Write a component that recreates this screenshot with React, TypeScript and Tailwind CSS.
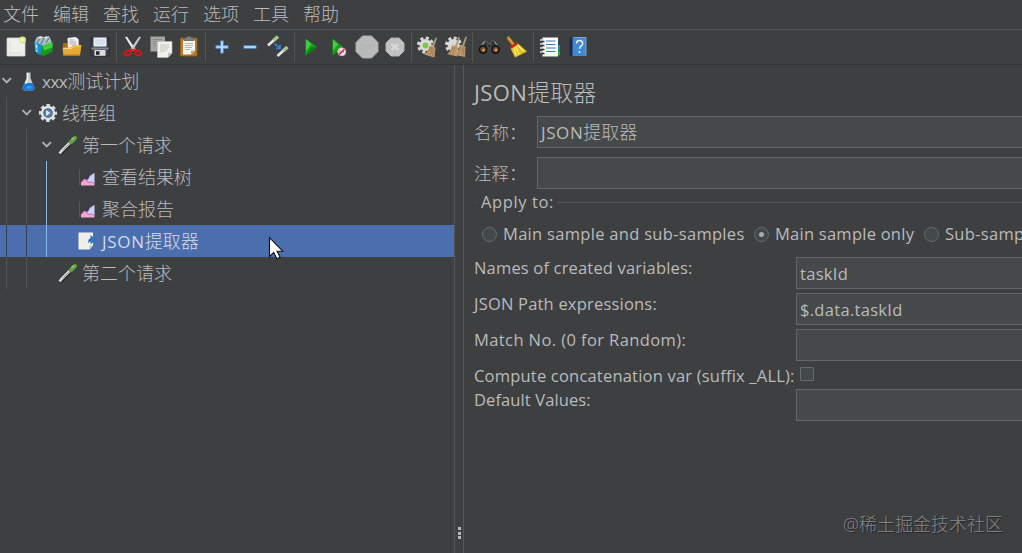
import React from "react";

type IconProps = { children: React.ReactNode };

function ToolIcon({ children }: IconProps) {
  return (
    <svg viewBox="0 0 28 28" className="block h-7 w-7 shrink-0" fill="none">
      {children}
    </svg>
  );
}

function Separator() {
  return (
    <div className="flex h-[30px] w-[5px] shrink-0 justify-center">
      <div className="h-full w-px bg-[#515355]" />
    </div>
  );
}

const NewIcon = () => (
  <ToolIcon>
    <rect x="5" y="5" width="18" height="18" rx="0.5" fill="#efefed" stroke="#d5d5d2" strokeWidth="0.8" />
    <path d="M8 9v12M8 20h12" stroke="#dadada" />
    <circle cx="20.5" cy="7" r="3.4" fill="#dcea84" />
    <circle cx="20.5" cy="7" r="1.6" fill="#f7fbc4" />
  </ToolIcon>
);
const TemplatesIcon = () => (
  <ToolIcon>
    <path d="M5 8l2-4 4-1 3 1 5-1 2 4 1 4-9 3-8-3z" fill="#aebfc4" />
    <path d="M7 10l3-5M11 11l3-6M16 10l3-5" stroke="#5f8790" strokeWidth="1.4" />
    <path d="M9 5l2-1M15 5l2-1" stroke="#eef4f5" strokeWidth="1.4" />
    <path d="M4.5 9l8 3v10.5c-4-1-6-2-7-4.5z" fill="#168fd0" />
    <path d="M4.5 9l3 1 .5 10-2.5-2z" fill="#41b9ef" />
    <path d="M12.5 13l10-4v9.5L14 23l-4-2z" fill="#159a1c" />
    <path d="M13 13l9.5-4v5.5l-8.5 3z" fill="#3fd038" />
    <path d="M6.5 12.5v2M6.5 17.5v1" stroke="#fff" strokeWidth="1.3" />
  </ToolIcon>
);
const OpenIcon = () => (
  <ToolIcon>
    <path d="M5 10h4l2 2h11v10H5z" fill="#a86f10" />
    <path d="M9.5 5l8-1 3 2 .5 10H10z" fill="#f1f1f1" />
    <path d="M11.5 7h5M11.5 9h7M11.5 11h7" stroke="#adadad" />
    <path d="M4.500 14.500H13l2-2.500h8.500L22 22.500H5.500z" fill="#e5a936" />
    <path d="M5.500 15.500H14l2-2.500h6.500" stroke="#f7d77d" />
    <path d="M5.500 22H22" stroke="#bd7f18" strokeWidth="1.2" />
  </ToolIcon>
);
const SaveIcon = () => (
  <ToolIcon>
    <path d="M5 5h18v18H6l-1-1.5z" fill="#3d4149" stroke="#24282e" />
    <path d="M7.5 4.500h13v9h-13z" fill="#eef2fa" />
    <path d="M9 7h10M9 9h10M9 11h10" stroke="#b4c2dd" strokeWidth="0.8" />
    <path d="M5.500 14.500h17v2h-17z" fill="#868c95" />
    <path d="M8.500 17h11v5.800h-11z" fill="#dcdcdc" />
    <path d="M10 18.200h3.500v3.600H10z" fill="#25282d" />
  </ToolIcon>
);
const CutIcon = () => (
  <ToolIcon>
    <path d="M6 4l2-.3 9 13-2.500 1z" fill="#edf0f2" />
    <path d="M22 4l-2-.3-9 13 2.500 1z" fill="#c5cacd" />
    <path d="M13.500 16l-3 2.500M14.500 16l3 2.500" stroke="#d31515" strokeWidth="2.2" />
    <ellipse cx="8.8" cy="20" rx="2.9" ry="2.3" stroke="#d81515" strokeWidth="2" transform="rotate(-30 8.8 20)" />
    <ellipse cx="19.2" cy="20" rx="2.9" ry="2.3" stroke="#d81515" strokeWidth="2" transform="rotate(30 19.2 20)" />
  </ToolIcon>
);
const CopyIcon = () => (
  <ToolIcon>
    <path d="M3.5 3.5H18v15H3.5z" fill="#a5a6a4" />
    <path d="M6 6.5h9M6 8.5h7M6 10.5h3M6 12.5h3" stroke="#8a8b89" />
    <path d="M10.5 8.5H25V20l-4 4.5H10.5z" fill="#f0f0ed" stroke="#bfc0bd" strokeWidth="0.6" />
    <path d="M13 12h9M13 14h9M13 16h8M13 18h6" stroke="#bdbebc" strokeWidth="0.9" />
    <path d="M21 24v-4h4z" fill="#bfc0be" />
  </ToolIcon>
);
const PasteIcon = () => (
  <ToolIcon>
    <rect x="5.5" y="5" width="16.5" height="18" rx="1" fill="#c27b1b" stroke="#955d16" />
    <path d="M8 7.5h12v10l-4 4H8z" fill="#f3f3f0" />
    <path d="M10 10.5h8M10 12.5h8M10 14.5h7M10 16.5h5" stroke="#b0b2b0" strokeWidth="0.9" />
    <path d="M16 21.5v-4h4z" fill="#b0b1ae" />
    <path d="M9 7.5V5h2.5l1-1.5h3l1 1.5H19v2.5z" fill="#7f827b" stroke="#5b5e58" strokeWidth="0.6" />
  </ToolIcon>
);
const PlusIcon = () => (
  <ToolIcon>
    <path d="M14 7.5v13M7.5 14h13" stroke="#5b9be2" strokeWidth="3.4" />
    <path d="M14 8.3v11.4M8.3 14h11.4" stroke="#c1e2ff" strokeWidth="1.6" />
  </ToolIcon>
);
const MinusIcon = () => (
  <ToolIcon>
    <path d="M7.5 14h13" stroke="#5b9be2" strokeWidth="3.4" />
    <path d="M8.3 14h11.4" stroke="#c1e2ff" strokeWidth="1.6" />
  </ToolIcon>
);
const ToggleIcon = () => (
  <ToolIcon>
    <path d="M4 12.5l6-5.5" stroke="#e3e6e0" strokeWidth="2.6" />
    <path d="M9.5 7.500l4.500-4" stroke="#a9c494" strokeWidth="3.600" />
    <path d="M13.500 23l6-5.500" stroke="#e3e6e0" strokeWidth="2.600" />
    <path d="M19 18l4.500-4" stroke="#a9c494" strokeWidth="3.600" />
    <path d="M10.500 10.500l5 4.500M16 11.800v3.700h-3.800" stroke="#3b85df" strokeWidth="1.6" />
  </ToolIcon>
);
const PlayIcon = () => (
  <ToolIcon>
    <path d="M8.5 5.5L20 14 8.5 22.5z" fill="#12a516" />
    <path d="M9 6.5l5.500 4.500L9 18z" fill="#48c947" />
    <path d="M9 21.5l5-7 5-.5z" fill="#087c0b" />
  </ToolIcon>
);
const PlayNoPauseIcon = () => (
  <ToolIcon>
    <path d="M7.5 5.5L18 14 7.5 22.5z" fill="#12a516" />
    <path d="M8 6.5l5 4.500L8 18z" fill="#48c947" />
    <circle cx="16.8" cy="18.8" r="4" fill="#e4ecf6" stroke="#e3a3aa" strokeWidth="0.9" />
    <path d="M15 17v3M18.500 18v2" stroke="#7f9fd0" strokeWidth="1.1" />
    <path d="M14 21.600l5.600-5.600" stroke="#da292b" strokeWidth="1.5" />
  </ToolIcon>
);
const StopIcon = () => (
  <ToolIcon>
    <path d="M9.5 3h9L25 9.500v9L18.500 25h-9L3 18.500v-9z" fill="#b9bab9" stroke="#adaead" />
    <path d="M7 12h3.500M7 16h3.500M13 12v4.500M17 12v4.500M20 12h2" stroke="#aeafae" />
  </ToolIcon>
);
const ShutdownIcon = () => (
  <ToolIcon>
    <path d="M10 5h8l5 5v8l-5 5h-8l-5-5v-8z" fill="#bfc0bf" stroke="#b4b5b4" />
    <path d="M10.5 11l7 6M17.5 11l-7 6" stroke="#d7d8d7" strokeWidth="2.5" />
  </ToolIcon>
);

const GearShape = () => (
  <>
    <circle cx="11.5" cy="12" r="7" stroke="#d8d9d6" strokeWidth="3" strokeDasharray="3.1 2.4" />
    <circle cx="11.5" cy="12" r="6" fill="#dadbd8" />
  </>
);
const ClearIcon = () => (
  <ToolIcon>
    <GearShape />
    <circle cx="11.5" cy="12.5" r="2.9" fill="#84c545" />
    <path d="M21.5 4.500l1.500.5-3 9-2.500-.5z" fill="#a89c88" />
    <path d="M15.500 12.500l6 2-1 10-10.500-3c2.500-1.500 4.500-4 5.500-9z" fill="#be9865" />
    <path d="M16.500 14l-3 7M18 14l-1.500 8M19.500 15l-1 8" stroke="#94714a" strokeWidth="0.7" />
  </ToolIcon>
);
const ClearAllIcon = () => (
  <ToolIcon>
    <GearShape />
    <path d="M16.500 4l1.500.5-3 9-2-.5zM23.500 3.500l1.500.5-3 9-2-.5z" fill="#a89c88" />
    <path d="M10 12l6 1.500-1 10-10-2.500c2.500-1.500 4-4 5-9z" fill="#be9b6c" />
    <path d="M17.500 11.500l6 2-.5 10.500-10-2c3-2 4-5 4.500-10.500z" fill="#c09a68" />
    <path d="M11 14l-3 7M13 14l-2 8M19 13l-3 8M20.500 14l-1 8M22 14l-.5 8" stroke="#94714a" strokeWidth="0.7" />
  </ToolIcon>
);
const SearchIcon = () => (
  <ToolIcon>
    <path d="M4.500 14.500L9 8h3l1 3h2.500l1-3h3l4.500 6.500-3.500 5-5-2.500h-3l-4 2.500z" fill="#313334" stroke="#5d5f60" strokeWidth="0.8" />
    <path d="M7 12l3-3.500M19.500 8.500l2.500 4" stroke="#929494" strokeWidth="1.2" />
    <path d="M13 11h3v4h-3z" fill="#1b1c1d" stroke="#777" strokeWidth="0.7" />
    <circle cx="8" cy="16.5" r="3.6" fill="#754630" stroke="#131516" strokeWidth="1.7" />
    <circle cx="20.5" cy="16.5" r="3.6" fill="#754630" stroke="#131516" strokeWidth="1.7" />
    <circle cx="8.5" cy="17" r="1.5" fill="#d89056" />
    <circle cx="21" cy="17" r="1.5" fill="#d89056" />
  </ToolIcon>
);
const BroomIcon = () => (
  <ToolIcon>
    <path d="M5.5 5l5 7" stroke="#a6681c" strokeWidth="3.6" strokeLinecap="round" />
    <path d="M5.5 5l4.500 6" stroke="#dda138" strokeWidth="2" strokeLinecap="round" />
    <path d="M14.500 10l9.500 8.500-12 6-4.500-9z" fill="#e0c21f" />
    <path d="M13 13.500l3 8M14.500 12l6 6M11 14.500l2 8" stroke="#fff077" strokeWidth="1.2" />
    <path d="M7.500 14.800L14.500 10" stroke="#ce211b" strokeWidth="2.6" />
  </ToolIcon>
);
const FunctionIcon = () => (
  <ToolIcon>
    <path d="M6.500 4.500H22v19H6.500z" fill="#fafcff" />
    <path d="M22 12h2v5h-2z" fill="#1583da" />
    <path d="M22 17.500h2v5h-2z" fill="#20a842" />
    <path d="M10 8h9.500M10 11.500h9.500M10 15h9.500M10 18.500h9.500" stroke="#3878bb" strokeWidth="1.1" />
    <path d="M4 7h4M4 11h4M4 15h4M4 19h4" stroke="#e8e8e8" strokeWidth="1.5" />
    <path d="M5.500 8.500h3M5.500 12.500h3M5.500 16.500h3M5.500 20.500h3" stroke="#303236" strokeWidth="1.3" />
  </ToolIcon>
);
const HelpIcon = () => (
  <ToolIcon>
    <path d="M5.500 5l4-1v19l-4-.5z" fill="#162c46" />
    <path d="M8.500 4.500H22V23H8.500z" fill="#4287d3" />
    <path d="M9.500 4.500H22v18" stroke="#89b6e1" strokeWidth="0.8" />
    <path d="M12.500 10.500c0-2 1.200-3 3-3 2 0 3.200 1.100 3.200 2.900 0 2.600-3.200 2.400-3.200 5.400M15.500 18v2" stroke="#e8f2ff" strokeWidth="1.5" />
  </ToolIcon>
);

const toolGroups: React.ComponentType[][] = [
  [NewIcon, TemplatesIcon, OpenIcon, SaveIcon],
  [CutIcon, CopyIcon, PasteIcon],
  [PlusIcon, MinusIcon, ToggleIcon],
  [PlayIcon, PlayNoPauseIcon, StopIcon, ShutdownIcon],
  [ClearIcon, ClearAllIcon],
  [SearchIcon, BroomIcon],
  [FunctionIcon, HelpIcon],
];

function TreeIcon({ kind }: { kind: string }) {
  return (
    <svg viewBox="0 0 22 22" className="block h-[22px] w-[22px] shrink-0" fill="none">
      {kind === "flask" && (
        <>
          <path d="M9.500 2.500h4V8l4 10c0 1.500-1 2.500-2 2.500h-8c-1 0-2-1-2-2.500l4-10z" fill="#c3cbd0" />
          <path d="M7.500 13h8l2 5c0 1.500-1 2.500-2 2.500h-8c-1 0-2-1-2-2.500z" fill="#1b78d6" />
          <path d="M10.500 3v7l-2 4" stroke="#f4f6f8" strokeWidth="1.2" />
          <ellipse cx="12" cy="17.5" rx="2.8" ry="1.4" fill="#3f9bea" />
        </>
      )}
      {kind === "gear" && (
        <>
          <circle cx="11" cy="11" r="7.6" stroke="#dcdcda" strokeWidth="3" strokeDasharray="3.4 2.57" strokeDashoffset="1.7" />
          <circle cx="11" cy="11" r="6" fill="#4a6791" stroke="#e2e3e3" strokeWidth="2.4" />
          <circle cx="11.5" cy="11.5" r="4" fill="#587bab" />
          <path d="M9 8l4.500 3L9 14z" fill="#dbe8f5" />
        </>
      )}
      {kind === "dropper" && (
        <>
          <path d="M2.500 19.500l3-1 8-8" stroke="#2a2d2b" strokeWidth="3" />
          <path d="M2.500 19.500l2.500-3 8-8" stroke="#d5d8d3" strokeWidth="2.6" />
          <path d="M6 16l7-7" stroke="#8a948c" strokeWidth="0.8" />
          <path d="M11.500 6.500l4 4" stroke="#31592c" strokeWidth="1.8" />
          <path d="M14 8l4-4" stroke="#66a04c" strokeWidth="4" strokeLinecap="round" />
          <path d="M14.500 5.500l2.500-2" stroke="#a9cf8c" strokeWidth="1.2" />
        </>
      )}
      {kind === "chart" && (
        <>
          <path d="M2.500 3.500V19" stroke="#5c545c" />
          <path d="M4 19.500v-3L7.500 13l3 1 2-2 5 3v4.500z" fill="#eda9d8" />
          <path d="M11 14l2-4 4.500-3v9l-3.500 1z" fill="#ccd2fb" />
          <path d="M11 13.500l2-3.500 4-3" stroke="#8690d6" strokeWidth="0.8" />
          <path d="M4 16.500L7.500 13l4 3.500 3.500-.5 2.500 1.500" stroke="#cf62ae" strokeWidth="0.9" />
        </>
      )}
      {kind === "extractor" && (
        <>
          <path d="M1.500 2.500H16v13l-3.500 4h-11z" fill="#f1f0ea" />
          <path d="M12.500 19.500v-4H16z" fill="#c3c5c4" />
          <path d="M4 7h7M4 10h6M4 13h6" stroke="#e6e6e2" strokeWidth="0.9" />
          <path d="M13.500 5l5.500 4.500-5.500 5v-3c-1.500 0-2 1-2.500 2 0-3 .5-5 2.500-5.500z" fill="#2a78b8" />
        </>
      )}
    </svg>
  );
}

/** Renders the Latin runs of a label in the regular weight beside light CJK glyphs. */
function Label({ text, latin }: { text: string; latin: string }) {
  return (
    <>
      {text.split(/([\x20-\x7e]+)/).map((part, i) =>
        i % 2 === 1 ? (
          <span key={i} className={`font-normal ${latin}`}>
            {part}
          </span>
        ) : (
          part
        ),
      )}
    </>
  );
}

const tree = [
  { label: "xxx测试计划", icon: "flask", depth: 0, open: true, latin: "text-[17px] tracking-[-0.5px]" },
  { label: "线程组", icon: "gear", depth: 1, open: true, latin: "" },
  { label: "第一个请求", icon: "dropper", depth: 2, open: true, latin: "" },
  { label: "查看结果树", icon: "chart", depth: 3, latin: "" },
  { label: "聚合报告", icon: "chart", depth: 3, latin: "" },
  { label: "JSON提取器", icon: "extractor", depth: 3, selected: true, latin: "text-[17px] tracking-[0.7px]" },
  { label: "第二个请求", icon: "dropper", depth: 2, latin: "" },
];

function TreePanel() {
  return (
    <div className="w-[454px] shrink-0">
      {tree.map((row, i) => (
        <div key={i} className={`flex h-8 items-center ${row.selected ? "bg-[#4b6eaf] text-[#d3dae6]" : ""}`}>
          {Array.from({ length: row.depth }, (_, d) => (
            <div key={d} className="h-full w-5 shrink-0 pl-[6px]">
              <div className={`h-full w-px ${d === 2 ? "bg-[#85b9e8]" : row.selected ? "bg-[#343f56]" : "bg-[#525456]"}`} />
            </div>
          ))}
          <div className="flex w-[17px] shrink-0 pl-[1px]">
            {row.open && (
              <svg viewBox="0 0 12 10" className="h-[10px] w-3" fill="none">
                <path d="M1.5 2.2l4.200 4.300 4.200-4.300" stroke="#b0b2b3" strokeWidth="1.8" />
              </svg>
            )}
          </div>
          <TreeIcon kind={row.icon} />
          <span className="ml-[3px] text-[18px] leading-8 whitespace-nowrap">
            <Label text={row.label} latin={row.latin} />
          </span>
        </div>
      ))}
    </div>
  );
}

const fieldClass = "h-8 flex-1 border border-r-0 border-[#646668] bg-[#45494a] pl-[3px] leading-[31px] whitespace-nowrap";

function Field({ value = "" }: { value?: string }) {
  return <div className={fieldClass}>{value}</div>;
}

function NameField() {
  return (
    <div className={`${fieldClass} text-[18px] font-light tracking-normal`}>
      <Label text="JSON提取器" latin="text-[17px] tracking-[0.6px]" />
    </div>
  );
}

function Radio({ label, checked, className }: { label: string; checked?: boolean; className: string }) {
  return (
    <div className={`flex shrink-0 items-center ${className}`}>
      <span className="mr-[6px] flex h-[15px] w-[15px] shrink-0 items-center justify-center rounded-full border border-[#686b6d] bg-[#43494a]">
        {checked && <span className="h-[5px] w-[5px] rounded-full bg-[#a9abac]" />}
      </span>
      <span className="whitespace-nowrap">{label}</span>
    </div>
  );
}

function ExtractorForm() {
  return (
    <div className="flex min-w-0 flex-1 flex-col overflow-hidden pl-[10px] text-[16.5px] font-normal tracking-[0.3px]">
      <h1 className="mt-[10px] h-[34px] text-[23px] leading-[34px] font-light tracking-normal">
        <Label text="JSON提取器" latin="text-[22px] tracking-[0.4px]" />
      </h1>
      <div className="mt-[7px] flex h-8 items-center">
        <span className="w-[63px] shrink-0 text-[17.5px] font-light tracking-normal">名称：</span>
        <NameField />
      </div>
      <div className="mt-[9px] flex h-8 items-center">
        <span className="w-[63px] shrink-0 text-[17.5px] font-light tracking-normal">注释：</span>
        <Field />
      </div>
      <div className="mt-[1px] flex h-6 items-center gap-[2px]">
        <div className="h-px w-[5px] bg-[#46494b]" />
        <span className="tracking-[0.6px]">Apply to:</span>
        <div className="h-px flex-1 bg-[#525557]" />
      </div>
      <div className="mt-2 flex h-6 items-center pl-2">
        <Radio label="Main sample and sub-samples" className="w-[272px]" />
        <Radio label="Main sample only" checked className="w-[170px] tracking-[0.25px]" />
        <Radio label="Sub-samples only" className="" />
      </div>
      <div className="mt-[11px] flex h-8">
        <span className="w-[322px] shrink-0 leading-[22px] tracking-[0.17px]">Names of created variables:</span>
        <Field value="taskId" />
      </div>
      <div className="mt-1 flex h-8">
        <span className="w-[322px] shrink-0 leading-[22px] tracking-[0.2px]">JSON Path expressions:</span>
        <Field value="$.data.taskId" />
      </div>
      <div className="mt-1 flex h-8">
        <span className="w-[322px] shrink-0 leading-[22px] tracking-[0.4px]">Match No. (0 for Random):</span>
        <Field />
      </div>
      <div className="mt-1 flex h-6">
        <span className="w-[326px] shrink-0 leading-[22px] tracking-[0.2px] whitespace-nowrap">
          Compute concatenation var (suffix _ALL):
        </span>
        <span className="mt-[2px] h-[14px] w-[14px] rounded-[1px] border border-[#686b6d] bg-[#43494a]" />
      </div>
      <div className="flex h-8">
        <span className="w-[322px] shrink-0 leading-[22px] tracking-[0.1px]">Default Values:</span>
        <Field />
      </div>
    </div>
  );
}

export default function App() {
  return (
    <div className="relative flex h-[553px] w-[1022px] flex-col overflow-hidden bg-[#3d3f41] font-['Open_Sans','Noto_Sans_CJK_SC',sans-serif] font-light text-[#bbbbbb]">
      <div className="flex h-[30px] shrink-0 items-center gap-[14px] border-b border-[#515355] pl-[3px] text-[18px]">
        {["文件", "编辑", "查找", "运行", "选项", "工具", "帮助"].map((m) => (
          <span key={m} className="leading-[29px]">{m}</span>
        ))}
      </div>
      <div className="flex h-[35px] shrink-0 items-center border-b border-[#323435] pl-[2px]">
        {toolGroups.map((group, i) => (
          <React.Fragment key={i}>
            {i > 0 && <Separator />}
            {group.map((Icon, j) => (
              <Icon key={j} />
            ))}
          </React.Fragment>
        ))}
      </div>
      <div className="flex min-h-0 flex-1">
        <TreePanel />
        <div className="flex w-[10px] shrink-0 flex-col items-center justify-end gap-[1.5px] border-x border-[#555759] pb-[14px]">
          <span className="h-[3px] w-[3px] bg-[#b6b8b9]" />
          <span className="h-[3px] w-[3px] bg-[#b6b8b9]" />
          <span className="h-[3px] w-[3px] bg-[#b6b8b9]" />
        </div>
        <ExtractorForm />
      </div>
      <svg viewBox="0 0 16 24" className="absolute top-[236px] left-[268px] h-6 w-4" fill="none">
        <path d="M1.5 1.5v19l4.200-4 3.200 6.200 3.200-1.500-3-6h5.600z" fill="#fff" stroke="#111" strokeWidth="1.1" />
      </svg>
      <div className="absolute right-[19px] bottom-[16px] text-[18px] leading-[26px] whitespace-nowrap text-[#85878a] [text-shadow:1px_1px_1px_#222]">
        @稀土掘金技术社区
      </div>
    </div>
  );
}
